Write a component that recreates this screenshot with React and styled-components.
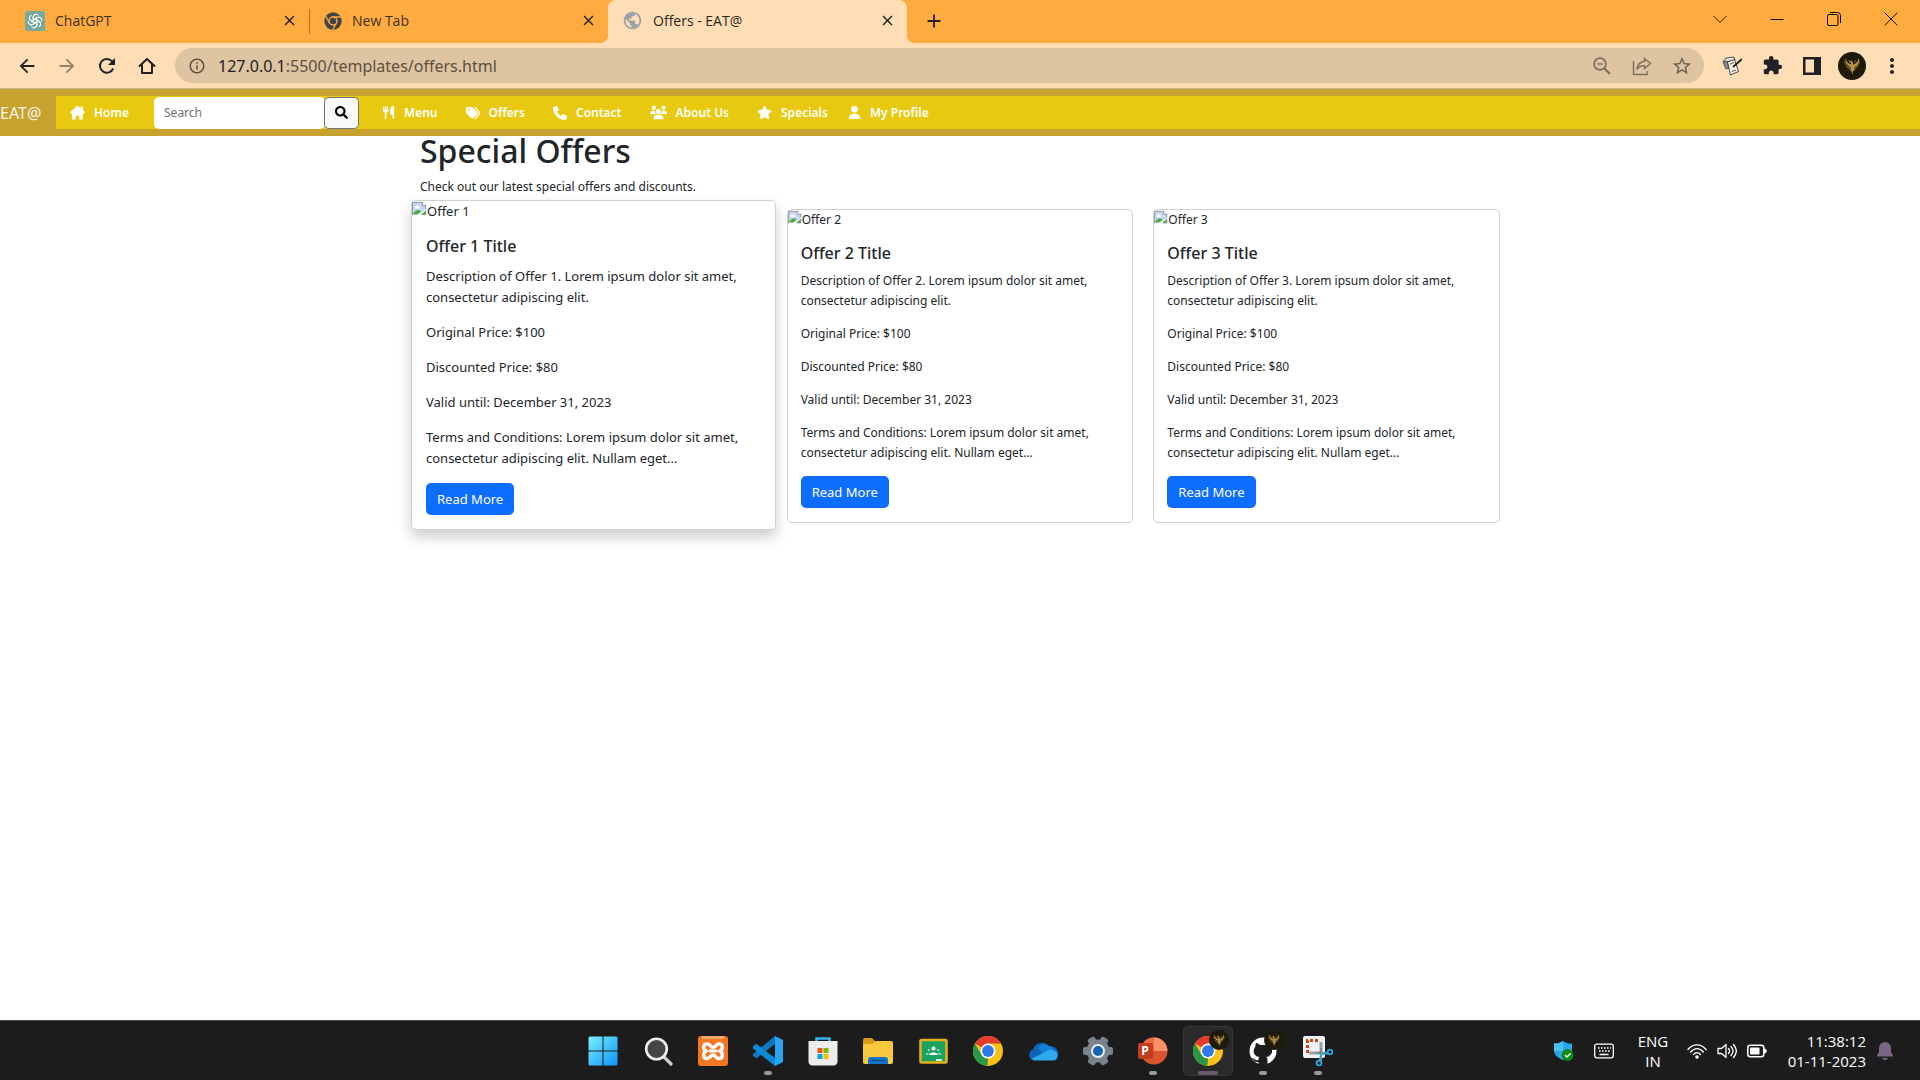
import React from "react";
import styled, { createGlobalStyle, css } from "styled-components";
import { FaSearch } from "react-icons/fa";
import {
  FaUtensils,
  FaTags,
  FaPhone,
  FaUsers,
  FaStar,
  FaUser,
} from "react-icons/fa6";
import {
  MdExtension,
  MdMoreVert,
  MdOutlineInfo,
  MdStarBorder,
  MdArrowBack,
  MdArrowForward,
  MdPublic,
  MdClose,
  MdAdd,
} from "react-icons/md";

const chromeFont = css`
  font-family: "Open Sans", "Noto Sans", sans-serif;
`;

const pageFont = css`
  font-family: "Noto Sans", "Open Sans", sans-serif;
`;

const GlobalStyle = createGlobalStyle`
  *, *::before, *::after { box-sizing: border-box; }
  body { margin: 0; background: #fff; color: #212529; ${chromeFont} }
  button, input { font: inherit; }
  h1, h2, p { margin: 0; }
`;

const Screen = styled.div`
  display: flex;
  flex-direction: column;
  min-height: 100vh;
`;

/* ---------- browser ---------- */

const IconButton = styled.button`
  display: flex;
  align-items: center;
  justify-content: center;
  width: ${(p) => p.$w || 40}px;
  height: ${(p) => p.$h || 32}px;
  flex: none;
  padding: 0;
  border: 0;
  background: none;
  color: ${(p) => p.$color || "#202124"};
`;

const TabStrip = styled.div`
  display: flex;
  align-items: stretch;
  height: 43px;
  padding-left: 11px;
  background: #ffab40;
`;

const Tab = styled.div`
  display: flex;
  align-items: center;
  gap: 10px;
  width: ${(p) => (p.$active ? 299 : 298)}px;
  padding: 0 10px 2px 14px;
  color: #3c3022;
  font-size: 14px;
  line-height: 20px;
  ${(p) =>
    p.$active &&
    css`
      position: relative;
      border-radius: 8px 8px 0 0;
      background: #ffdeb5;
      color: #2b2620;
      &::before,
      &::after {
        content: "";
        position: absolute;
        bottom: 0;
        width: 8px;
        height: 8px;
      }
      &::before {
        left: -8px;
        background: radial-gradient(circle at 0 0, #ffab40 8px, #ffdeb5 8px);
      }
      &::after {
        right: -8px;
        background: radial-gradient(circle at 100% 0, #ffab40 8px, #ffdeb5 8px);
      }
    `}
`;

const TabTitle = styled.span`
  flex: 1;
`;

const TabDivider = styled.span`
  align-self: center;
  width: 1px;
  height: 25px;
  background: #a87331;
`;

const WindowControls = styled.div`
  display: flex;
  margin-left: auto;
`;

const Toolbar = styled.div`
  display: flex;
  align-items: center;
  height: 46px;
  padding: 0 8px 0 7px;
  border-bottom: 1px solid #c4b098;
  background: #ffdeb5;
`;

const AddressBar = styled.form`
  display: flex;
  flex: 1;
  align-items: center;
  height: 35px;
  margin: 0 8px;
  padding: 0 2px 0 8px;
  border-radius: 18px;
  background: #dec4a0;
`;

const Address = styled.div`
  flex: 1;
  padding-left: 7px;
  color: #5c5143;
  ${pageFont}
  font-size: 16px;
  line-height: 24px;
  b {
    font-weight: 400;
    color: #202124;
  }
`;

/* ---------- site navigation ---------- */

const SiteHeader = styled.header`
  display: flex;
  align-items: center;
  gap: 11px;
  height: 47px;
  background: #c8a22e;
  ${pageFont}
`;

const Brand = styled.a`
  width: 45px;
  flex: none;
  color: #f8f4e6;
  font-size: 16px;
  line-height: 24px;
  text-decoration: none;
`;

const SiteNav = styled.nav`
  display: flex;
  flex: 1;
  align-items: center;
  height: 33px;
  background: #e8c90f;
`;

const NavLink = styled.a`
  display: flex;
  align-items: center;
  gap: 9px;
  padding: 0 ${(p) => p.$right || 14}px 0 14px;
  color: #fff;
  font-size: 12px;
  font-weight: 600;
  line-height: 20px;
  text-decoration: none;
`;

const SearchForm = styled.form`
  display: flex;
  height: 32px;
  margin: 0 9px 0 11px;
`;

const SearchInput = styled.input`
  width: 171px;
  padding: 0 10px;
  border: 0;
  border-radius: 5px;
  background: #fff;
  font-size: 12px;
  &::placeholder {
    color: #6c7075;
  }
`;

const SearchButton = styled.button`
  display: flex;
  align-items: center;
  justify-content: center;
  width: 35px;
  padding: 0;
  border: 1px solid #6c757d;
  border-radius: 5px;
  margin-left: -1px;
  background: #f8f9fa;
  color: #000;
`;

/* ---------- page ---------- */

const Page = styled.main`
  flex: 1;
  width: 100%;
  max-width: 1080px;
  margin: 0 auto;
  ${pageFont}
`;

const PageTitle = styled.h1`
  padding-bottom: 11px;
  font-size: 32px;
  font-weight: 500;
  line-height: 30px;
`;

const Lead = styled.p`
  font-size: 12px;
  line-height: 20px;
`;

const Offers = styled.div`
  display: grid;
  grid-template-columns: repeat(3, 1fr);
  align-items: center;
  gap: 20px;
  padding-top: 12px;
`;

const Card = styled.article`
  --gap: 13px;
  --line: 20px;
  --pad: 13px;
  border: 1px solid #d0d0d0;
  border-radius: 5px;
  background: #fff;
  font-size: 12px;
  line-height: var(--line);
  ${(p) =>
    p.$raised &&
    css`
      --gap: 14px;
      --line: 21px;
      --pad: 14px;
      margin: -9px -9px -7px;
      font-size: 13px;
      box-shadow: 0 7px 14px rgba(0, 0, 0, 0.2);
    `}
`;

const CardImage = styled.div`
  display: flex;
  height: var(--line);
  svg {
    flex: none;
  }
`;

const CardBody = styled.div`
  display: flex;
  flex-direction: column;
  align-items: flex-start;
  gap: var(--gap);
  padding: var(--pad) var(--pad) 14px;
`;

const CardTitle = styled.h2`
  margin-bottom: -5px;
  font-size: 16px;
  font-weight: 500;
  line-height: var(--line);
`;

const ReadMore = styled.button`
  height: 32px;
  padding: 0 11px;
  border: 0;
  border-radius: 5px;
  background: #0d6efd;
  color: #fff;
  font-size: 13px;
`;

/* ---------- taskbar ---------- */

const Taskbar = styled.footer`
  display: grid;
  grid-template-columns: 1fr auto 1fr;
  align-items: center;
  height: 60px;
  border-top: 1px solid #4a4a4a;
  background: #1c1c1c;
  color: #fff;
`;

const Apps = styled.div`
  grid-column: 2;
  display: flex;
  gap: 5px;
`;

const AppButton = styled.button`
  position: relative;
  display: flex;
  align-items: center;
  justify-content: center;
  width: 50px;
  height: 50px;
  padding: 0;
  border: 1px solid ${(p) => (p.$active ? "#363636" : "transparent")};
  border-radius: 5px;
  background: ${(p) => (p.$active ? "#2a2a2a" : "none")};
  &::after {
    content: "";
    display: ${(p) => (p.$open || p.$active ? "block" : "none")};
    position: absolute;
    bottom: 0;
    left: 50%;
    width: ${(p) => (p.$active ? 20 : 8)}px;
    margin-left: ${(p) => (p.$active ? -10 : -4)}px;
    height: 4px;
    border-radius: 2px;
    background: ${(p) => (p.$active ? "#6b5871" : "#9a9a9a")};
  }
`;

const AppBadge = styled.span`
  position: absolute;
  top: 3px;
  right: 3px;
  display: flex;
`;

const Tray = styled.div`
  display: flex;
  align-items: center;
  justify-content: flex-end;
  padding-right: 16px;
  font-size: 15px;
  line-height: 20px;
`;

const TrayText = styled.div`
  width: ${(p) => p.$w}px;
  text-align: ${(p) => p.$align};
`;

/* ---------- drawings ---------- */

const Svg = ({ size = 30, box = 30, children }) => (
  <svg width={size} height={size} viewBox={`0 0 ${box} ${box}`} fill="none" aria-hidden="true">
    {children}
  </svg>
);

const Phoenix = ({ size }) => (
  <Svg size={size} box={28}>
    <circle cx="14" cy="14" r="14" fill="#1e1909" />
    <path
      d="M7.500 6c-.8 4 .7 7 4.500 9l1 1.500-1.500 1.500 2 1 .8 4 .8-4 2-1-1.300-1.500 1-1.500c3.800-2 5-5 4-9-1 4-3 6-5.500 6.500l-.8-3-1.600-1-1 1 1 1.500v1.500C10.500 12 8.500 10 7.500 6Z"
      fill="#b59149"
    />
    <path
      d="M6.500 9.500c.5 3.500 2.500 5.500 5.500 6.500M8.500 14.500c1 1.500 2 2 3.500 2.200M21.500 9.500c-.5 3.500-2.500 5.500-5.500 6.500M19.500 14.500c-1 1.500-2 2-3.500 2.200M11 8l1 3M17.500 8l-1 3"
      stroke="#8c6e32"
      strokeWidth=".9"
    />
  </Svg>
);

const ChatGptIcon = () => (
  <Svg size={20} box={20}>
    <path d="M3 0h14a3 3 0 0 1 3 3v17H3a3 3 0 0 1-3-3V3a3 3 0 0 1 3-3Z" fill="#75a99c" />
    {[0, 60, 120, 180, 240, 300].map((a) => (
      <path
        key={a}
        d="M8.300 11V6.400c0-3 3.700-4.200 5.300-2M8.300 8.700l3.700-2.100c2-1.200 4.300-.2 4.700 1.900"
        transform={`rotate(${a} 10 10)`}
        stroke="#fff"
        strokeWidth=".9"
      />
    ))}
  </Svg>
);

const GreyChrome = () => (
  <Svg size={18} box={18}>
    <circle cx="9" cy="9" r="8.700" fill="#404347" />
    <path d="M9 5h8M5.500 11 1.600 4M12.500 11 8.600 18" stroke="#ffab40" strokeWidth="1.300" />
    <circle cx="9" cy="9" r="4" fill="#404347" stroke="#ffab40" strokeWidth="1.400" />
  </Svg>
);

const BrokenImage = ({ size }) => (
  <Svg size={size} box={16}>
    <path d="M0 1h11l4 4v4l-9 6H0Z" fill="#c3d6f5" />
    <path d="M.5 15V1.500H11L14.500 5v3" stroke="#8f9296" />
    <path d="M11 1v4h4" fill="#fff" stroke="#8f9296" />
    <path d="M3 7c0-2 3-3 4-1 2 0 2 2 1 2H3Z" fill="#fff" />
    <path d="M1 14c2-4 5-5 7-4l2 1-4 3Z" fill="#4ea83b" />
    <path d="M10 14 15 10v5h-5Z" fill="#4ea83b" />
    <path d="M14.500 11v3.500H10" stroke="#8f9296" />
  </Svg>
);

const HomeOutlineIcon = () => (
  <Svg size={18} box={18}>
    <path d="M1 9.500 9 2l8 7.500M4 7.500v8.500h10V7.500" stroke="#202124" strokeWidth="2" strokeLinejoin="round" />
  </Svg>
);
const ReloadIcon = () => (
  <Svg size={18} box={18}>
    <path d="M15.200 11.500A6.900 6.900 0 1 1 14 4.200L16 6.500" stroke="#202124" strokeWidth="2" />
    <path d="M17 1v7h-7Z" fill="#202124" />
  </Svg>
);
const ZoomOutIcon = () => (
  <Svg size={18} box={18}>
    <circle cx="7" cy="7" r="5.900" stroke="#7c6f5d" strokeWidth="1.700" />
    <path d="m11.500 11.500 5.500 5.500" stroke="#7c6f5d" strokeWidth="2.200" />
    <path d="M4.200 7h5.600" stroke="#7c6f5d" strokeWidth="1.400" />
  </Svg>
);
const ChevronIcon = () => (
  <Svg size={14} box={14}>
    <path d="m.5 4 6.500 6.500L13.500 4" stroke="#33240f" />
  </Svg>
);
const MinimizeIcon = () => (
  <Svg size={14} box={14}>
    <path d="M.5 7.500h13" stroke="#000" />
  </Svg>
);
const RestoreIcon = () => (
  <Svg size={14} box={14}>
    <rect x=".5" y="2.500" width="10.500" height="11" rx="1.500" stroke="#000" />
    <path d="M3 .5h7.500a3 3 0 0 1 3 3V11" stroke="#000" />
  </Svg>
);
const CloseWindowIcon = () => (
  <Svg size={14} box={14}>
    <path d="m.7.700 12.600 12.600M13.300.700.7 13.300" stroke="#1b1204" />
  </Svg>
);
const ShareIcon = () => (
  <Svg size={20} box={20}>
    <path d="M1.500 5v13.500h13.500V15" stroke="#7c6f5d" strokeWidth="1.400" />
    <path
      d="M12.500 2.500 18.500 7.500l-6 5V9.600c-3.500 0-6 1-7.500 4 .3-4.500 3-7.600 7.500-8.300Z"
      stroke="#7c6f5d"
      strokeWidth="1.400"
    />
  </Svg>
);
const NotesIcon = () => (
  <Svg size={20} box={20}>
    <path d="M1 6 4 2l8-1 1 3-8 2Z" fill="#e9e4da" stroke="#444" strokeWidth=".9" />
    <path d="m1 6 4-1 2 7-3 1Z" fill="#8a8a8a" stroke="#444" strokeWidth=".8" />
    <path d="m5.500 6 7-2.500 4 12-8 3.500Z" fill="#f7f3ea" stroke="#333" strokeWidth=".9" />
    <path d="m11 11 9-8" stroke="#222" strokeWidth="1.700" />
    <path d="m8 8 4-1.500M10 15.500l4-1.500" stroke="#555" />
  </Svg>
);
const PanelIcon = () => (
  <Svg size={18} box={18}>
    <path d="M0 0h18v18H0Zm2.500 2.500v13H11v-13Z" fill="#202124" fillRule="evenodd" />
  </Svg>
);

const ChromeIcon = () => (
  <Svg>
    <circle cx="15" cy="15" r="15" fill="#fbc116" />
    <path d="M15 15 2 7.500A15 15 0 0 1 28 7.500H15Z" fill="#e33b2e" />
    <path d="M2 7.500 8.500 18.800 15 22.500 14.500 30A15 15 0 0 1 2 7.500Z" fill="#279847" />
    <path d="m21.500 18.700-6.500 11.300-1-.1 4-8Z" fill="#fbc116" />
    <circle cx="15" cy="15" r="7.500" fill="#fff" />
    <circle cx="15" cy="15" r="5.900" fill="#3079ea" />
  </Svg>
);

const StartIcon = () => (
  <Svg>
    <defs>
      <linearGradient id="start" x1="0" y1="0" x2="1" y2="1">
        <stop stopColor="#7bf1fe" />
        <stop offset="1" stopColor="#0c93fb" />
      </linearGradient>
    </defs>
    <path
      d="M2 .5h12.500v14H.5V2A1.500 1.500 0 0 1 2 .5Zm13.500 0H28A1.500 1.500 0 0 1 29.500 2v12.500h-14Zm-15 15h14v14H2A1.500 1.500 0 0 1 .5 28Zm15 0h14V28a1.500 1.500 0 0 1-1.500 1.500H15.500Z"
      fill="url(#start)"
    />
  </Svg>
);
const SearchAppIcon = () => (
  <Svg>
    <path d="m21 21 7 7" stroke="#ccced2" strokeWidth="3.200" strokeLinecap="round" />
    <circle cx="13.500" cy="13" r="10.300" fill="#454545" stroke="#eceef0" strokeWidth="2.600" />
  </Svg>
);
const XamppIcon = () => (
  <Svg>
    <rect width="30" height="30" rx="3" fill="#f37622" />
    <path d="M4 0h22v3H4Z" fill="#f9a970" />
    <path
      d="M9.500 8C5 7 4.500 13 8 15c-3.500 2-3 8 1.500 7.500 3 0 2.500-3.500 5.500-3.500s2.500 3.500 5.500 3.500C25 23 25.500 17 22 15c3.500-2 3-8-1.500-7-3 0-2.500 3.500-5.500 3.500S12.500 8 9.500 8Z"
      stroke="#fff"
      strokeWidth="3.400"
    />
    <path d="M11 15h8" stroke="#fff" strokeWidth="3" />
  </Svg>
);
const CodeIcon = () => (
  <Svg>
    <path d="M22 8 3.500 22.500 0 20v-2L22 0Z" fill="#1076bd" />
    <path d="M22 22 3.500 8 0 10v2.500L22 30Z" fill="#0c8bd8" />
    <path d="m22 0 8 4v22l-8 4Z" fill="#2aa5f2" />
  </Svg>
);
const StoreIcon = () => (
  <Svg>
    <path d="M8.500 8V2.500h13V8" stroke="#32b5ee" strokeWidth="2.600" />
    <path d="M.5 5h29v20a4 4 0 0 1-4 4.500h-21a4 4 0 0 1-4-4.500Z" fill="#ececec" />
    <path d="M9.500 12h5v5h-5Z" fill="#f25022" />
    <path d="M15.500 12h5v5h-5Z" fill="#7fba00" />
    <path d="M9.500 18h5v5h-5Z" fill="#00a4ef" />
    <path d="M15.500 18h5v5h-5Z" fill="#ffb900" />
  </Svg>
);
const FolderIcon = () => (
  <Svg>
    <path d="M0 4a2 2 0 0 1 2-2h7l3 3v6H0Z" fill="#dc9a12" />
    <path d="M0 8h9l4-3h15a2 2 0 0 1 2 2v19a2 2 0 0 1-2 2H2a2 2 0 0 1-2-2Z" fill="#fbc93d" />
    <path d="M5 28v-4a3 3 0 0 1 3-3h14a3 3 0 0 1 3 3v4Z" fill="#1374c9" />
    <path d="M8.500 24.500h13" stroke="#0a4b8c" strokeWidth="1.400" />
  </Svg>
);
const ClassroomIcon = () => (
  <Svg>
    <rect x="2.500" y="4" width="26" height="22.500" rx="1" fill="#1aa260" stroke="#e5b019" strokeWidth="2.600" />
    <circle cx="15.500" cy="12.500" r="2" fill="#fff" />
    <circle cx="11" cy="14" r="1.300" fill="#87ceac" />
    <circle cx="20" cy="14" r="1.300" fill="#87ceac" />
    <path d="M11 19c0-3.500 9-3.500 9 0Z" fill="#fff" />
    <path d="M7.500 19c0-2 2-3 3.500-2l-1 2Zm16 0c0-2-2-3-3.500-2l1 2Z" fill="#87ceac" />
    <path d="M18 24h6" stroke="#fff" strokeWidth="1.600" />
  </Svg>
);
const CloudIcon = () => (
  <Svg>
    <path d="M5 24a5.500 5.500 0 0 1 0-10.500A9 9 0 0 1 21 10.500 7 7 0 0 1 25 24Z" fill="#0f62b8" />
    <path d="M10 12a7 7 0 0 1 11-2c4 1 4 4 8 8l-9 3Z" fill="#137fd6" />
    <path d="M3 23 21 14c5-1 9 2 8.500 6 0 3-2 4.500-4.500 4.500H6Z" fill="#2ea9ef" />
  </Svg>
);
const GearIcon = () => (
  <Svg>
    {[0, 60, 120].map((a) => (
      <rect key={a} x="11" y="0" width="8" height="30" rx="2" fill="#7a838d" transform={`rotate(${a + 30} 15 15)`} />
    ))}
    <circle cx="15" cy="15" r="11.500" fill="#7a838d" />
    <circle cx="15" cy="15" r="6" fill="#1565b5" stroke="#e9eef2" strokeWidth="2" />
  </Svg>
);
const SlideBadge = styled.span`
  position: absolute;
  left: 9px;
  top: 16px;
  width: 15px;
  height: 16px;
  border-radius: 2px;
  background: #c23c1f;
  color: #fff;
  font-size: 12px;
  font-weight: 700;
  line-height: 16px;
`;
const SlidesIcon = () => (
  <>
    <Svg>
      <circle cx="16" cy="15" r="13.500" fill="#d8552f" />
      <path d="M16 1.500A13.500 13.500 0 0 1 29.500 15H16Z" fill="#ff8f6b" />
      <path d="M16 1.500V15H2.500A13.500 13.500 0 0 1 16 1.500Z" fill="#ed6c47" />
    </Svg>
    <SlideBadge>P</SlideBadge>
  </>
);
const GithubIcon = () => (
  <Svg>
    <circle cx="15" cy="15" r="13.500" fill="#fff" />
    <path
      d="M8 7c2 0 3 1 4 2h6c1-1 2-2 4-2 .7 1.500.5 2.500.3 3.500 4 5 .7 10-4 10.500 1 1 1.200 2 1.200 3.500V29h-9v-3c-3 .5-4.500-1-5.500-3l-1.500-1c3-.6 3 3 7 2 0-1.500.4-2.500 1-3-5-.5-8-5.500-4-10.500C7.300 9.500 7.300 8.500 8 7Z"
      fill="#1c1c1c"
    />
  </Svg>
);
const SnipIcon = () => (
  <Svg>
    <rect x="0" y="0" width="22" height="22" rx="2" fill="#f1f2f4" />
    <path d="M4.500 17V4.500H17" stroke="#d2401c" strokeWidth="3" strokeDasharray="3 2" />
    <path d="M6 17h12V6" stroke="#9aa3ab" strokeWidth="3" />
    <path d="M13 17h13M18 12v13" stroke="#7d8790" strokeWidth="2" />
    <circle cx="27" cy="16" r="2.400" stroke="#28a5e8" strokeWidth="1.800" />
    <circle cx="16" cy="27" r="2.400" stroke="#28a5e8" strokeWidth="1.800" />
    <path d="m25 17.500-7 1-1.500 6" stroke="#28a5e8" strokeWidth="1.600" />
  </Svg>
);

const ShieldIcon = () => (
  <Svg size={20} box={20}>
    <path d="M9 0c3 2 5 2.500 9 2.500V9c0 5-4 8-9 10-5-2-9-5-9-10V2.500C4 2.500 6 2 9 0Z" fill="#2aa7ea" />
    <path d="M9 10h9c-.5 4-4 7-9 9Z" fill="#1268b3" />
    <path d="M9 0v10H0V2.500C4 2.500 6 2 9 0Z" fill="#47c2f5" />
    <circle cx="13.500" cy="14" r="6" fill="#0f8a16" />
    <path d="m11 14 2 2 3.500-3.500" stroke="#fff" strokeWidth="1.400" />
  </Svg>
);
const KeyboardIcon = () => (
  <Svg size={20} box={20}>
    <rect x=".7" y="3.200" width="18.600" height="13.600" rx="2" stroke="#fff" strokeWidth="1.300" />
    <path d="M4 7h13M5 10h12" stroke="#fff" strokeWidth="1.600" strokeDasharray="1.600 1.400" />
    <path d="M5.500 13.500h9" stroke="#fff" strokeWidth="1.500" />
  </Svg>
);
const WifiIcon = () => (
  <Svg size={20} box={20}>
    <path
      d="M1 8.500c5-6.200 13-6.200 18 0M3.700 11c4-4.500 8.700-4.500 12.600 0M6.500 13.500c2.300-2.500 4.700-2.500 7 0"
      stroke="#fff"
      strokeWidth="1.400"
      strokeLinecap="round"
    />
    <circle cx="10" cy="16" r="1.800" fill="#fff" />
  </Svg>
);
const SpeakerIcon = () => (
  <Svg size={20} box={20}>
    <path d="M1 7.500h3.500L9 3.500v13l-4.500-4H1Z" stroke="#fff" strokeWidth="1.300" strokeLinejoin="round" />
    <path
      d="M11.500 7.500c1.300 1.500 1.300 3.500 0 5M14 5.500c2.500 2.700 2.500 6.300 0 9M16.500 3.500c3.500 4 3.500 9 0 13"
      stroke="#fff"
      strokeWidth="1.300"
      strokeLinecap="round"
    />
  </Svg>
);
const BatteryIcon = () => (
  <Svg size={20} box={20}>
    <rect x=".8" y="4.300" width="16" height="11.500" rx="2.500" stroke="#fff" strokeWidth="1.500" />
    <rect x="3" y="6.500" width="9.500" height="7" rx="1" fill="#fff" />
    <path d="M17.500 8c2.500 0 2.500 4 0 4Z" fill="#fff" stroke="#fff" />
  </Svg>
);
const BellIcon = () => (
  <Svg size={20} box={20}>
    <path
      d="M10 1a6 6 0 0 1 6 6v4l2 3.500v1H2v-1L4 11V7a6 6 0 0 1 6-6ZM7 17h6c-.5 2.500-5.500 2.500-6 0Z"
      fill="#7b6484"
    />
  </Svg>
);
const HouseIcon = () => (
  <Svg size={15} box={14}>
    <path
      d="M7 .5 10 3V1.500h2v3.300l2 1.900-.8 1.300H12v5.500H8.600V10H5.400v3.500H2V8H.8L0 6.700Z"
      fill="#fff"
    />
  </Svg>
);

/* ---------- data ---------- */

const navItems = [
  { label: "Menu", icon: FaUtensils, size: 13 },
  { label: "Offers", icon: FaTags, size: 14 },
  { label: "Contact", icon: FaPhone, size: 14 },
  { label: "About Us", icon: FaUsers, size: 17 },
  { label: "Specials", icon: FaStar, size: 15, right: 6 },
  { label: "My Profile", icon: FaUser, size: 13 },
];

const apps = [
  { name: "Start", icon: StartIcon },
  { name: "Search", icon: SearchAppIcon },
  { name: "XAMPP", icon: XamppIcon },
  { name: "Code", icon: CodeIcon, open: true },
  { name: "Store", icon: StoreIcon },
  { name: "Files", icon: FolderIcon },
  { name: "Classroom", icon: ClassroomIcon },
  { name: "Chrome", icon: ChromeIcon },
  { name: "OneDrive", icon: CloudIcon },
  { name: "Settings", icon: GearIcon },
  { name: "PowerPoint", icon: SlidesIcon, open: true },
  { name: "Chrome window", icon: ChromeIcon, active: true, badge: true },
  { name: "GitHub", icon: GithubIcon, open: true, badge: true },
  { name: "Snipping Tool", icon: SnipIcon, open: true },
];

function OfferCard({ number, raised }) {
  return (
    <Card $raised={raised}>
      <CardImage>
        <BrokenImage size={raised ? 15 : 14} />
        <span>Offer {number}</span>
      </CardImage>
      <CardBody>
        <CardTitle>Offer {number} Title</CardTitle>
        <p>
          Description of Offer {number}. Lorem ipsum dolor sit amet,
          <br />
          consectetur adipiscing elit.
        </p>
        <p>Original Price: $100</p>
        <p>Discounted Price: $80</p>
        <p>Valid until: December 31, 2023</p>
        <p>
          Terms and Conditions: Lorem ipsum dolor sit amet,
          <br />
          consectetur adipiscing elit. Nullam eget...
        </p>
        <ReadMore type="button">Read More</ReadMore>
      </CardBody>
    </Card>
  );
}

export default function App() {
  return (
    <Screen>
      <GlobalStyle />
      <TabStrip>
        <Tab>
          <ChatGptIcon />
          <TabTitle>ChatGPT</TabTitle>
          <IconButton $w={20} $h={20} aria-label="Close ChatGPT">
            <MdClose size={17} />
          </IconButton>
        </Tab>
        <TabDivider />
        <Tab>
          <GreyChrome />
          <TabTitle>New Tab</TabTitle>
          <IconButton $w={20} $h={20} aria-label="Close New Tab">
            <MdClose size={17} />
          </IconButton>
        </Tab>
        <Tab $active>
          <MdPublic size={21} color="#9aa3ab" />
          <TabTitle>Offers - EAT@</TabTitle>
          <IconButton $w={20} $h={20} aria-label="Close Offers">
            <MdClose size={17} />
          </IconButton>
        </Tab>
        <IconButton $w={54} $h={42} aria-label="New tab">
          <MdAdd size={22} />
        </IconButton>
        <WindowControls>
          <IconButton $w={57} $h={37} aria-label="Search tabs">
            <ChevronIcon />
          </IconButton>
          <IconButton $w={57} $h={37} aria-label="Minimize">
            <MinimizeIcon />
          </IconButton>
          <IconButton $w={57} $h={37} aria-label="Restore">
            <RestoreIcon />
          </IconButton>
          <IconButton $w={58} $h={37} aria-label="Close window">
            <CloseWindowIcon />
          </IconButton>
        </WindowControls>
      </TabStrip>
      <Toolbar>
        <IconButton aria-label="Back">
          <MdArrowBack size={22} />
        </IconButton>
        <IconButton $color="#93816a" aria-label="Forward">
          <MdArrowForward size={22} />
        </IconButton>
        <IconButton aria-label="Reload">
          <ReloadIcon />
        </IconButton>
        <IconButton aria-label="Home page">
          <HomeOutlineIcon />
        </IconButton>
        <AddressBar>
          <IconButton $w={28} type="button" $color="#5c5143" aria-label="Site information">
            <MdOutlineInfo size={18} />
          </IconButton>
          <Address>
            <b>127.0.0.1</b>:5500/templates/offers.html
          </Address>
          <IconButton type="button" aria-label="Zoom">
            <ZoomOutIcon />
          </IconButton>
          <IconButton type="button" aria-label="Share">
            <ShareIcon />
          </IconButton>
          <IconButton type="button" $color="#6b6252" aria-label="Bookmark">
            <MdStarBorder size={22} />
          </IconButton>
        </AddressBar>
        <IconButton aria-label="Notes">
          <NotesIcon />
        </IconButton>
        <IconButton aria-label="Extensions">
          <MdExtension size={21} />
        </IconButton>
        <IconButton aria-label="Side panel">
          <PanelIcon />
        </IconButton>
        <IconButton aria-label="Profile">
          <Phoenix size={28} />
        </IconButton>
        <IconButton aria-label="Menu">
          <MdMoreVert size={24} />
        </IconButton>
      </Toolbar>

      <SiteHeader>
        <Brand href="#">EAT@</Brand>
        <SiteNav>
          <NavLink href="#">
            <HouseIcon />
            Home
          </NavLink>
          <SearchForm>
            <SearchInput type="search" placeholder="Search" aria-label="Search" />
            <SearchButton type="button" aria-label="Submit search">
              <FaSearch size={13} />
            </SearchButton>
          </SearchForm>
          {navItems.map(({ label, icon: Icon, size, right }) => (
            <NavLink key={label} href="#" $right={right}>
              <Icon size={size} />
              {label}
            </NavLink>
          ))}
        </SiteNav>
      </SiteHeader>

      <Page>
        <PageTitle>Special Offers</PageTitle>
        <Lead>Check out our latest special offers and discounts.</Lead>
        <Offers>
          <OfferCard number={1} raised />
          <OfferCard number={2} />
          <OfferCard number={3} />
        </Offers>
      </Page>

      <Taskbar>
        <Apps>
          {apps.map(({ name, icon: Icon, open, active, badge }) => (
            <AppButton key={name} aria-label={name} $open={open} $active={active}>
              <Icon />
              {badge && (
                <AppBadge>
                  <Phoenix size={20} />
                </AppBadge>
              )}
            </AppButton>
          ))}
        </Apps>
        <Tray>
          <IconButton aria-label="Security">
            <ShieldIcon />
          </IconButton>
          <IconButton aria-label="Keyboard">
            <KeyboardIcon />
          </IconButton>
          <TrayText $w={58} $align="center">
            ENG
            <br />
            IN
          </TrayText>
          <IconButton $w={30} aria-label="Network">
            <WifiIcon />
          </IconButton>
          <IconButton $w={30} aria-label="Volume">
            <SpeakerIcon />
          </IconButton>
          <IconButton $w={30} aria-label="Battery">
            <BatteryIcon />
          </IconButton>
          <TrayText $w={94} $align="right">
            11:38:12
            <br />
            01-11-2023
          </TrayText>
          <IconButton $w={38} aria-label="Notifications">
            <BellIcon />
          </IconButton>
        </Tray>
      </Taskbar>
    </Screen>
  );
}
